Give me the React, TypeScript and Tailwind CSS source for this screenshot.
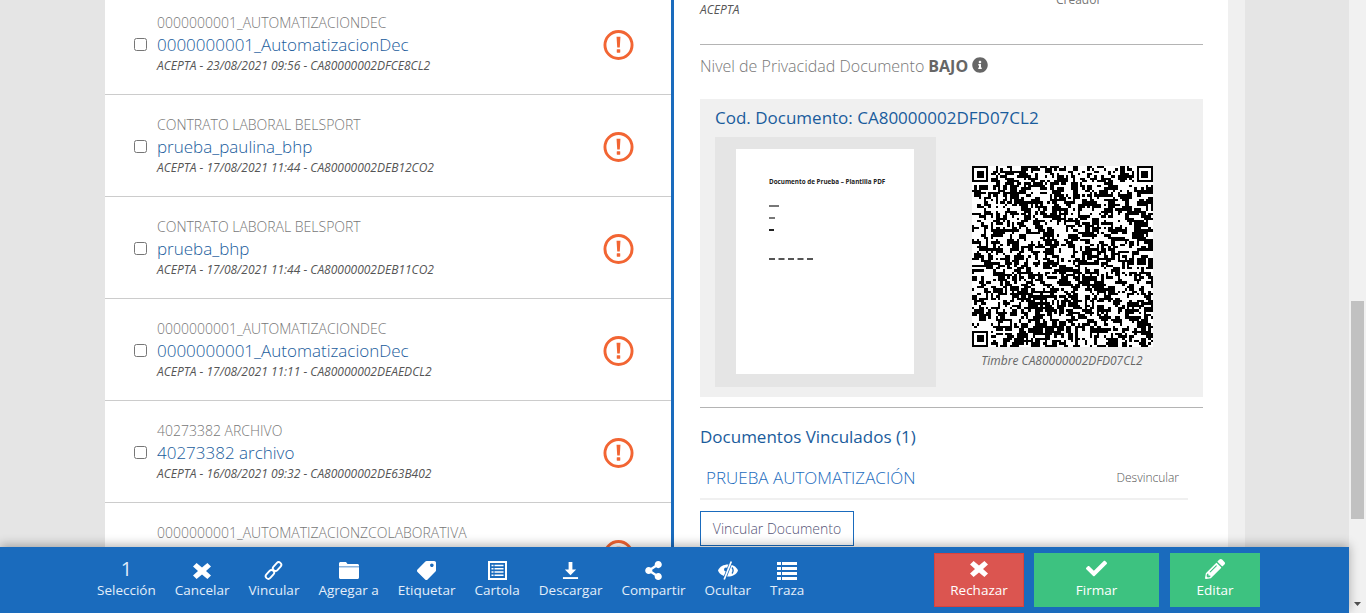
import type { ReactNode } from "react";
import { FaCheck, FaInfoCircle, FaPencilAlt, FaShareAlt, FaTag } from "react-icons/fa";

const docs = [
  { group: "0000000001_AUTOMATIZACIONDEC", title: "0000000001_AutomatizacionDec", meta: "ACEPTA - 23/08/2021 09:56 - CA80000002DFCE8CL2" },
  { group: "CONTRATO LABORAL BELSPORT", title: "prueba_paulina_bhp", meta: "ACEPTA - 17/08/2021 11:44 - CA80000002DEB12CO2" },
  { group: "CONTRATO LABORAL BELSPORT", title: "prueba_bhp", meta: "ACEPTA - 17/08/2021 11:44 - CA80000002DEB11CO2" },
  { group: "0000000001_AUTOMATIZACIONDEC", title: "0000000001_AutomatizacionDec", meta: "ACEPTA - 17/08/2021 11:11 - CA80000002DEAEDCL2" },
  { group: "40273382 ARCHIVO", title: "40273382 archivo", meta: "ACEPTA - 16/08/2021 09:32 - CA80000002DE63B402" },
  { group: "0000000001_AUTOMATIZACIONZCOLABORATIVA", title: "0000000001_AutomatizacionZColaborativa", meta: "ACEPTA - 16/08/2021 09:10 - CA80000002DE63A402" },
];

const TimesIcon = () => (
  <svg viewBox="0 0 18 16" className="w-[18px] h-[16px]" fill="currentColor">
    <path d="M3.600 0 9 4.600 14.400 0 18 3.400 13 8l5 4.600L14.400 16 9 11.400 3.600 16 0 12.600 5 8 0 3.400z" />
  </svg>
);

const LinkIcon = () => (
  <svg viewBox="0 0 20 20" className="w-[19px] h-[19px]" fill="none" stroke="currentColor" strokeWidth="2">
    <rect x="11" y="0.600" width="5.500" height="10.500" rx="2.750" transform="rotate(42 13.750 5.850)" />
    <rect x="3.500" y="8.900" width="5.500" height="10.500" rx="2.750" transform="rotate(42 6.250 14.150)" />
  </svg>
);

const FolderIcon = () => (
  <svg viewBox="0 0 20 17" className="w-[20px] h-[17px]" fill="currentColor">
    <path d="M1.500 0H7l1.500 2H18.500C19.300 2 20 2.700 20 3.500V4.500H0V1.500C0 .7.7 0 1.500 0z" />
    <path d="M0 5.300H20V15.500C20 16.300 19.300 17 18.500 17H1.500C.7 17 0 16.300 0 15.500z" />
  </svg>
);

const CartolaIcon = () => (
  <svg viewBox="0 0 19 19" className="w-[19px] h-[19px]" fill="currentColor" fillRule="evenodd">
    <path d="M0 0h19v19H0zM2 2v15h15V2z" />
    <path d="M3.500 3.800h2v1.500h-2zM6.500 3.800h9v1.500h-9zM3.500 7h2v1.500h-2zM6.500 7h9v1.500h-9zM3.500 10.200h2v1.500h-2zM6.500 10.200h9v1.500h-9zM3.500 13.400h2v1.500h-2zM6.500 13.400h9v1.500h-9z" />
  </svg>
);

const DownloadIcon = () => (
  <svg viewBox="0 0 18 20" className="w-[17px] h-[19px]" fill="currentColor">
    <path d="M7 1h4v8h4l-6 6-6-6h4z" />
    <rect x="1" y="17" width="16" height="2" />
  </svg>
);

const EyeOffIcon = () => (
  <svg viewBox="0 0 20 19" className="w-[20px] h-[19px]">
    <path d="M0 9.500C3 1.500 17 1.500 20 9.500 17 17.500 3 17.500 0 9.500z" fill="currentColor" />
    <path d="M14 6.500C15.500 8.500 15.500 10.500 14 12.500" fill="none" stroke="#1a6bbd" strokeWidth="1.300" />
    <circle cx="8" cy="8.500" r="2" fill="#1a6bbd" />
    <path d="M13.500 0 6 19" stroke="#1a6bbd" strokeWidth="3.200" />
    <path d="M13.300 .5 6.200 18.500" stroke="currentColor" strokeWidth="1.700" />
  </svg>
);

const TrazaIcon = () => (
  <svg viewBox="0 0 20 18" className="w-[20px] h-[18px]" fill="currentColor">
    <path d="M0 0h4v3H0zM5 0h15v3H5zM0 5h4v3H0zM5 5h15v3H5zM0 10h4v3H0zM5 10h15v3H5zM0 15h4v3H0zM5 15h15v3H5z" />
  </svg>
);

function ToolItem({ icon, label }: { icon: ReactNode; label: string }) {
  return (
    <div className="flex flex-col items-center text-[#e3eefa]">
      <div className="h-[19px] flex items-center justify-center text-white">{icon}</div>
      <span className="text-[13.500px] leading-[20px] whitespace-nowrap">{label}</span>
    </div>
  );
}

function ActionButton({ icon, label, className }: { icon: ReactNode; label: string; className: string }) {
  return (
    <div className={`h-[54px] flex flex-col items-center justify-center text-white pb-[2px] ${className}`}>
      <div className="h-[22px] flex items-center">{icon}</div>
      <span className="text-[13.500px] leading-[20px]">{label}</span>
    </div>
  );
}

function AlertIcon() {
  return (
    <svg viewBox="0 0 32 32" className="w-[31px] h-[32px] shrink-0">
      <circle cx="16" cy="16" r="14" fill="none" stroke="#f26533" strokeWidth="3" />
      <path d="M14 7.500h4l-.7 11h-2.600z" fill="#f26533" />
      <rect x="14.200" y="20.500" width="3.600" height="3.600" rx=".5" fill="#f26533" />
    </svg>
  );
}

// Not the real code, just a deterministic module pattern with the three finders
function buildQrPath() {
  const n = 77;
  let seed = 48271;
  const rnd = () => {
    seed = (seed * 16807) % 2147483647;
    return seed / 2147483647;
  };
  const inFinder = (x: number, y: number) =>
    (x < 8 && y < 8) || (x >= n - 8 && y < 8) || (x < 8 && y >= n - 8);
  const grid: boolean[][] = [];
  let d = "";
  for (let y = 0; y < n; y++) {
    grid[y] = [];
    for (let x = 0; x < n; x++) {
      // neighbours pull the modules together, so runs look like the reference's
      const left = x > 0 ? grid[y][x - 1] : false;
      const up = y > 0 ? grid[y - 1][x] : false;
      const p = left === up ? (left ? 0.72 : 0.28) : 0.5;
      const on = rnd() < p;
      grid[y][x] = on;
      if (on && !inFinder(x, y)) d += `M${x} ${y}h1v1h-1z`;
    }
  }
  for (const [fx, fy] of [[0, 0], [n - 7, 0], [0, n - 7]]) {
    d += `M${fx} ${fy}h7v1h-7zM${fx} ${fy + 6}h7v1h-7zM${fx} ${fy}h1v7h-1zM${fx + 6} ${fy}h1v7h-1zM${fx + 2} ${fy + 2}h3v3h-3z`;
  }
  return d;
}

const qrPath = buildQrPath();

function DocRow({ group, title, meta }: { group: string; title: string; meta: string }) {
  return (
    <div className="h-[102px] shrink-0 flex items-center border-b border-[#cccccc] pl-[29px] pr-[37px] pt-[2px]">
      <input type="checkbox" className="w-[13px] h-[13px] mr-[10px] shrink-0" />
      <div className="flex-1 min-w-0 pb-[2px]">
        <div className="text-[14px] leading-[21px] font-light text-[#777777] whitespace-nowrap">{group}</div>
        <div className="text-[17px] leading-[23px] font-light text-[#1a5c9c] whitespace-nowrap">{title}</div>
        <div className="text-[12px] leading-[20px] italic text-[#555555] whitespace-nowrap">{meta}</div>
      </div>
      <AlertIcon />
    </div>
  );
}

export default function App() {
  return (
    <div className="w-[1366px] h-[613px] flex overflow-hidden bg-[#e5e5e5] font-['Open_Sans',sans-serif]">
      <div className="w-[1349px] flex flex-col">
        <div className="flex-1 min-h-0 flex overflow-hidden pl-[105px]">
          {/* document list */}
          <div className="w-[566px] bg-white flex flex-col -mt-[7px]">
            {docs.map((doc) => (
              <DocRow key={doc.meta} {...doc} />
            ))}
          </div>
          <div className="w-[3px] bg-[#1a6bbd]" />
          <div className="w-px bg-white" />

          {/* document detail */}
          <div className="w-[553px] bg-white px-[25px]">
            <div className="flex h-[44px] border-b border-[#b4b4b4] box-content items-start">
              <span className="text-[12px] leading-[18px] italic text-[#555555] w-[356px] pt-[1px]">ACEPTA</span>
              <span className="text-[12px] leading-[18px] text-[#777777] -mt-[9px]">Creador</span>
            </div>
            <div className="flex items-center h-[41px] text-[16px] font-light text-[#777777]">
              Nivel de Privacidad Documento
              <b className="font-bold text-[#666666] ml-[4px]">BAJO</b>
              <FaInfoCircle className="ml-[4px] text-[#666666] w-[16px] h-[16px] -mt-[2px]" />
            </div>
            <div className="mt-[13px] h-[298px] bg-[#f0f0f0] px-[15px] pt-[8px]">
              <div className="text-[17px] leading-[22px] text-[#1a5c9c]">Cod. Documento: CA80000002DFD07CL2</div>
              <div className="flex mt-[8px]">
                <div className="w-[221px] h-[250px] bg-[#e5e5e5] pl-[21px] pt-[12px]">
                  <div className="w-[178px] h-[225px] bg-white pl-[33px] pt-[29px]">
                    <div className="text-[6.300px] leading-[8px] font-bold text-[#222222] whitespace-nowrap">Documento de Prueba – Plantilla PDF</div>
                    <div className="mt-[19px] w-[10px] border-t-2 border-dashed border-[#777777]" />
                    <div className="mt-[10px] w-[6px] border-t-2 border-dashed border-[#777777]" />
                    <div className="mt-[10px] w-[5px] h-[2px] bg-[#222222]" />
                    <div className="mt-[27px] w-[44px] border-t-2 border-dashed border-[#555555]" />
                  </div>
                </div>
                <div className="flex-1 flex flex-col items-center pt-[29px] px-[35px]">
                  <svg viewBox="0 0 77 77" className="w-[181px] h-[181px] bg-white" shapeRendering="crispEdges">
                    <path d={qrPath} fill="#000000" />
                  </svg>
                  <div className="mt-[5px] text-[12px] leading-[18px] italic text-[#666666] whitespace-nowrap">Timbre CA80000002DFD07CL2</div>
                </div>
              </div>
            </div>
            <div className="mt-[10px] border-t border-[#b4b4b4] pt-[18px]">
              <div className="text-[17px] leading-[22px] text-[#1a5c9c]">Documentos Vinculados (1)</div>
              <div className="mt-[9px] w-[488px] h-[43px] pl-[6px] pr-[9px] flex items-center justify-between border-b-2 border-[#f0f0f0]">
                <span className="text-[17px] font-light text-[#1a6bbd]">PRUEBA AUTOMATIZACIÓN</span>
                <span className="text-[12px] font-light text-[#555555]">Desvincular</span>
              </div>
              <div className="mt-[11px] w-[154px] h-[35px] flex items-center justify-center border border-[#1a6bbd] text-[14px] font-light text-[#555577]">
                Vincular Documento
              </div>
            </div>
          </div>
          <div className="w-[17px] bg-[#f0f0f0]" />
        </div>

        {/* bottom action bar */}
        <div className="relative z-10 h-[66px] shrink-0 bg-[#1a6bbd] shadow-[0_-2px_10px_rgba(0,0,0,0.3)] flex items-center pl-[97px] pr-[89px] pb-[1px]">
          <div className="flex gap-[19px] flex-1 mt-[2px]">
            <ToolItem icon={<span className="text-[20px] leading-[19px] text-[#dfeafa] -mt-[5px]">1</span>} label="Selección" />
            <ToolItem icon={<TimesIcon />} label="Cancelar" />
            <ToolItem icon={<LinkIcon />} label="Vincular" />
            <ToolItem icon={<FolderIcon />} label="Agregar a" />
            <ToolItem icon={<FaTag className="w-[19px] h-[19px] -scale-x-100" />} label="Etiquetar" />
            <ToolItem icon={<CartolaIcon />} label="Cartola" />
            <ToolItem icon={<DownloadIcon />} label="Descargar" />
            <ToolItem icon={<FaShareAlt className="w-[19px] h-[19px]" />} label="Compartir" />
            <ToolItem icon={<EyeOffIcon />} label="Ocultar" />
            <ToolItem icon={<TrazaIcon />} label="Traza" />
          </div>
          <div className="flex">
            <ActionButton icon={<TimesIcon />} label="Rechazar" className="w-[90px] bg-[#db5550] border border-[#d9433e]" />
            <ActionButton icon={<FaCheck className="w-[21px] h-[21px]" />} label="Firmar" className="w-[125px] ml-[10px] bg-[#3dc280]" />
            <ActionButton icon={<FaPencilAlt className="w-[20px] h-[20px]" />} label="Editar" className="w-[90px] ml-[11px] bg-[#3dc280]" />
          </div>
        </div>
      </div>

      {/* page scrollbar */}
      <div className="w-[17px] bg-[#f1f1f1] flex flex-col items-center pt-[301px]">
        <div className="w-[13px] h-[218px] bg-[#c1c1c1]" />
        <svg viewBox="0 0 7 4" className="w-[7px] h-[4px] mt-[83px]">
          <path d="M0 0h7L3.500 4z" fill="#505050" />
        </svg>
      </div>
    </div>
  );
}
